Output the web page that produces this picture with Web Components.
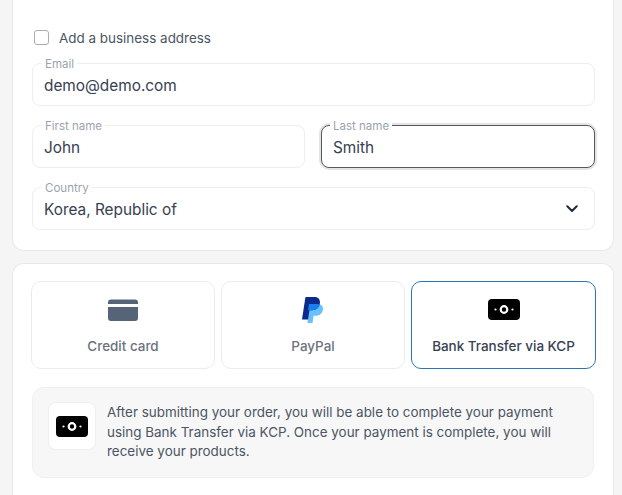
<!DOCTYPE html>
<html lang="en">
<head>
<meta charset="utf-8">
<title>Checkout</title>
<style>
  html, body { margin:0; height:495px; overflow:hidden; background:#f5f5f5; }
  body { font-family:Inter, "Liberation Sans", sans-serif; color:#374151; }
</style>
</head>
<body>
<check-out>
  <form-card slot="address" kind="address">
    <check-box>Add a business address</check-box>
    <text-field label="Email" value="demo@demo.com" style="margin-top:18px"></text-field>
    <div style="display:grid;grid-template-columns:273px 274px;gap:16px;margin-top:19px">
      <text-field label="First name" value="John"></text-field>
      <text-field label="Last name" value="Smith" focused></text-field>
    </div>
    <text-field label="Country" value="Korea, Republic of" select style="margin-top:19px"></text-field>
  </form-card>
  <form-card slot="payment" kind="payment">
    <pay-tabs>
      <pay-tile icon="card">Credit card</pay-tile>
      <pay-tile icon="paypal">PayPal</pay-tile>
      <pay-tile icon="bank" selected>Bank Transfer via KCP</pay-tile>
    </pay-tabs>
    <pay-note>After submitting your order, you will be able to complete your payment using Bank Transfer via KCP. Once your payment is complete, you will receive your products.</pay-note>
  </form-card>
</check-out>

<script>
// shared icons, all inline svg
const ICONS = {
  card: `<svg width="30" height="22" viewBox="0 0 30 22"><path fill="#556577" d="M0 3.5A3 3 0 0 1 3 .5h24a3 3 0 0 1 3 3V5H0zM0 8h30v11a3 3 0 0 1-3 3H3a3 3 0 0 1-3-3z"/></svg>`,
  paypal: `<svg width="22" height="27" viewBox="0 0 22 27">
    <path fill="#69c0ff" d="M7 7h8.500c3.600 0 6 2.200 5.400 5.800-.7 3.900-3.500 6-7 6h-2.300l-1 6.600a1 1 0 0 1-1 .6H5.500z"/>
    <path fill="#0a2a8c" d="M4.300 0h7.900c4 0 6.400 2.500 5.600 6.500-.8 4.300-4 6.700-8 6.700H7.500L6 22.500H.8a.7.7 0 0 1-.7-.8L3.300.9A1 1 0 0 1 4.300 0z"/>
    <path fill="#1a7df0" d="M7 7h8.300c1 0 1.900.2 2.600.6-.9 3.500-3.900 5.600-7.600 5.600H6.100z"/>
  </svg>`,
  bank: `<svg width="32" height="21" viewBox="0 0 32 21"><rect width="32" height="21" rx="4" fill="#000"/><circle cx="16" cy="10.500" r="3.300" fill="none" stroke="#fff" stroke-width="2.200"/><circle cx="7.500" cy="10.500" r="1.100" fill="#fff"/><circle cx="24.500" cy="10.500" r="1.100" fill="#fff"/></svg>`
};

class CheckOut extends HTMLElement {
  constructor(){ super(); this.attachShadow({ mode:'open' }); }
  connectedCallback(){
    this.shadowRoot.innerHTML = `
      <style>
        :host { display:flex; flex-direction:column; gap:12px; padding:0 8px 0 12px; }
      </style>
      <slot name="address"></slot>
      <slot name="payment"></slot>
    `;
  }
}
customElements.define('check-out', CheckOut);

class FormCard extends HTMLElement {
  constructor(){ super(); this.attachShadow({ mode:'open' }); }
  connectedCallback(){
    this.shadowRoot.innerHTML = `
      <style>
        :host {
          display:block; box-sizing:border-box; background:#fff;
          border:1px solid #e8e8e8; padding:17px 18px;
          border-radius:12px;
        }
        :host([kind="address"]) { border-top:0; border-radius:0 0 12px 12px; height:251px; padding:30px 18px 0 19px; }
        :host([kind="payment"]) { border-bottom:0; border-radius:12px 12px 0 0; height:240px; }
      </style>
      <slot></slot>
    `;
  }
}
customElements.define('form-card', FormCard);

class CheckBox extends HTMLElement {
  constructor(){ super(); this.attachShadow({ mode:'open' }); }
  connectedCallback(){
    this.shadowRoot.innerHTML = `
      <style>
        :host { display:flex; align-items:center; gap:10px; padding-left:2px; height:15px; font-size:13.44px; color:#4b5563; }
        .box { width:15px; height:15px; box-sizing:border-box; border:1.500px solid #a8adb5; border-radius:3px; background:#fff; }
      </style>
      <span class="box"></span><span><slot></slot></span>
    `;
  }
}
customElements.define('check-box', CheckBox);

class TextField extends HTMLElement {
  constructor(){ super(); this.attachShadow({ mode:'open' }); }
  connectedCallback(){
    const label = this.getAttribute('label') || '';
    const value = this.getAttribute('value') || '';
    const chevron = this.hasAttribute('select')
      ? `<svg class="chev" width="12" height="8" viewBox="0 0 12 8"><path d="M1.300 1.300 6 6l4.700-4.700" fill="none" stroke="#1f2937" stroke-width="2" stroke-linecap="round" stroke-linejoin="round"/></svg>`
      : '';
    this.shadowRoot.innerHTML = `
      <style>
        :host {
          display:flex; align-items:center; justify-content:space-between; position:relative;
          box-sizing:border-box; height:43px; padding:1px 16px 0 11px; background:#fff;
          border:1px solid #eeeeee; border-radius:8px;
          font-size:15.36px; color:#374151;
        }
        :host([focused]) { border-color:#55585e; box-shadow:0 0 0 2px #e4e4e6; }
        .label {
          position:absolute; left:9px; top:-7px; padding:0 3px; background:#fff;
          font-size:11.52px; line-height:14px; color:#9ca3af;
        }
        :host([focused]) .label { left:8px; }
      </style>
      <span class="label">${label}</span>
      <span class="value">${value}</span>
      ${chevron}
    `;
  }
}
customElements.define('text-field', TextField);

class PayTabs extends HTMLElement {
  constructor(){ super(); this.attachShadow({ mode:'open' }); }
  connectedCallback(){
    this.shadowRoot.innerHTML = `
      <style>
        :host { display:grid; grid-template-columns:184px 184px 185px; gap:6px; }
      </style>
      <slot></slot>
    `;
  }
}
customElements.define('pay-tabs', PayTabs);

class PayTile extends HTMLElement {
  constructor(){ super(); this.attachShadow({ mode:'open' }); }
  connectedCallback(){
    this.shadowRoot.innerHTML = `
      <style>
        :host {
          display:flex; flex-direction:column; align-items:center; box-sizing:border-box;
          height:88px; padding-top:14px; background:#fff; border:1px solid #ececec; border-radius:10px;
          font-size:13.44px; color:#6b7280; font-weight:500;
        }
        :host([selected]) { border:1.500px solid #2a76b5; padding-top:13.500px; color:#374151; }
        .icon { height:28px; display:flex; align-items:center; justify-content:center; }
        .text { margin-top:12px; line-height:20px; }
      </style>
      <span class="icon">${ICONS[this.getAttribute('icon')] || ''}</span>
      <span class="text"><slot></slot></span>
    `;
  }
}
customElements.define('pay-tile', PayTile);

class PayNote extends HTMLElement {
  constructor(){ super(); this.attachShadow({ mode:'open' }); }
  connectedCallback(){
    this.shadowRoot.innerHTML = `
      <style>
        :host {
          display:flex; gap:11px; box-sizing:border-box; margin:18px 1px 0 1px; height:91px;
          padding:14px 15px; background:#f7f7f8; border:1px solid #f0f0f0; border-radius:12px;
          font-size:13.44px; line-height:19.5px; color:#4b5563;
        }
        .icon {
          flex:none; width:48px; height:48px; display:flex; align-items:center; justify-content:center;
          background:#fff; border:1px solid #f0f0f0; border-radius:8px; box-sizing:border-box;
        }
        .text { margin-top:1px; }
      </style>
      <span class="icon">${ICONS.bank}</span>
      <span class="text"><slot></slot></span>
    `;
  }
}
customElements.define('pay-note', PayNote);
</script>
</body>
</html>
